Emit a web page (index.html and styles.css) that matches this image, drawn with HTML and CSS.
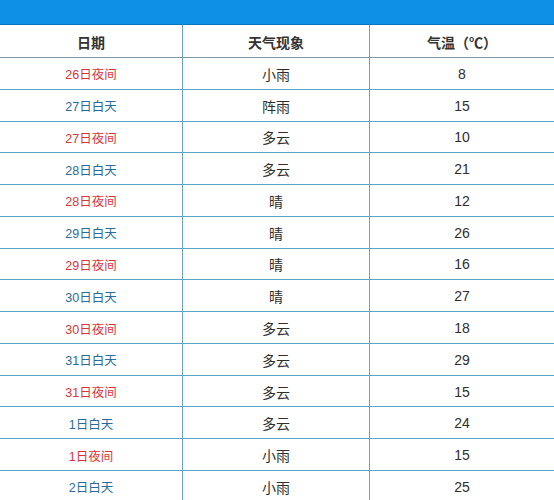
FILE: index.html
```html
<!DOCTYPE html>
<html lang="zh">
<head>
<meta charset="utf-8">
<link rel="stylesheet" href="styles.css">
</head>
<body>
<div class="topbar"></div>
<div class="grid">
  <div class="cell head">日期</div><div class="cell head">天气现象</div><div class="cell head last">气温（℃）</div>
  <div class="cell night">26日夜间</div><div class="cell">小雨</div><div class="cell last">8</div>
  <div class="cell day">27日白天</div><div class="cell">阵雨</div><div class="cell last">15</div>
  <div class="cell night">27日夜间</div><div class="cell">多云</div><div class="cell last">10</div>
  <div class="cell day">28日白天</div><div class="cell">多云</div><div class="cell last">21</div>
  <div class="cell night">28日夜间</div><div class="cell">晴</div><div class="cell last">12</div>
  <div class="cell day">29日白天</div><div class="cell">晴</div><div class="cell last">26</div>
  <div class="cell night">29日夜间</div><div class="cell">晴</div><div class="cell last">16</div>
  <div class="cell day">30日白天</div><div class="cell">晴</div><div class="cell last">27</div>
  <div class="cell night">30日夜间</div><div class="cell">多云</div><div class="cell last">18</div>
  <div class="cell day">31日白天</div><div class="cell">多云</div><div class="cell last">29</div>
  <div class="cell night">31日夜间</div><div class="cell">多云</div><div class="cell last">15</div>
  <div class="cell day">1日白天</div><div class="cell">多云</div><div class="cell last">24</div>
  <div class="cell night">1日夜间</div><div class="cell">小雨</div><div class="cell last">15</div>
  <div class="cell day">2日白天</div><div class="cell">小雨</div><div class="cell last">25</div>
</div>
</body>
</html>
```
FILE: styles.css
```css
html, body {
  margin: 0;
  padding: 0;
  background: #ffffff;
}
body {
  font-family: "Liberation Sans", "Noto Sans CJK SC", sans-serif;
  color: #333333;
  width: 554px;
  overflow: hidden;
}
.topbar {
  height: 24px;
  background: #0c8fe4;
  border-bottom: 1px solid #0a74bd;
}
.grid {
  display: grid;
  grid-template-columns: 183px 187px 184px;
  grid-template-rows: 33px;
  grid-auto-rows: 31.77px;
}
.cell {
  box-sizing: border-box;
  display: flex;
  align-items: center;
  justify-content: center;
  padding-top: 1px;
  border-right: 1px solid #5fa3c6;
  border-bottom: 1px solid #5fa3c6;
  font-size: 14px;
  color: #2e2e2e;
}
.cell.last {
  border-right: none;
}
.head {
  font-weight: 600;
  border-bottom-color: #7f9aa6;
  font-size: 14px;
  color: #333333;
}
.night {
  color: #d8353b;
  font-size: 12.5px;
}
.day {
  color: #2a6b9c;
  font-size: 12.5px;
}
```
